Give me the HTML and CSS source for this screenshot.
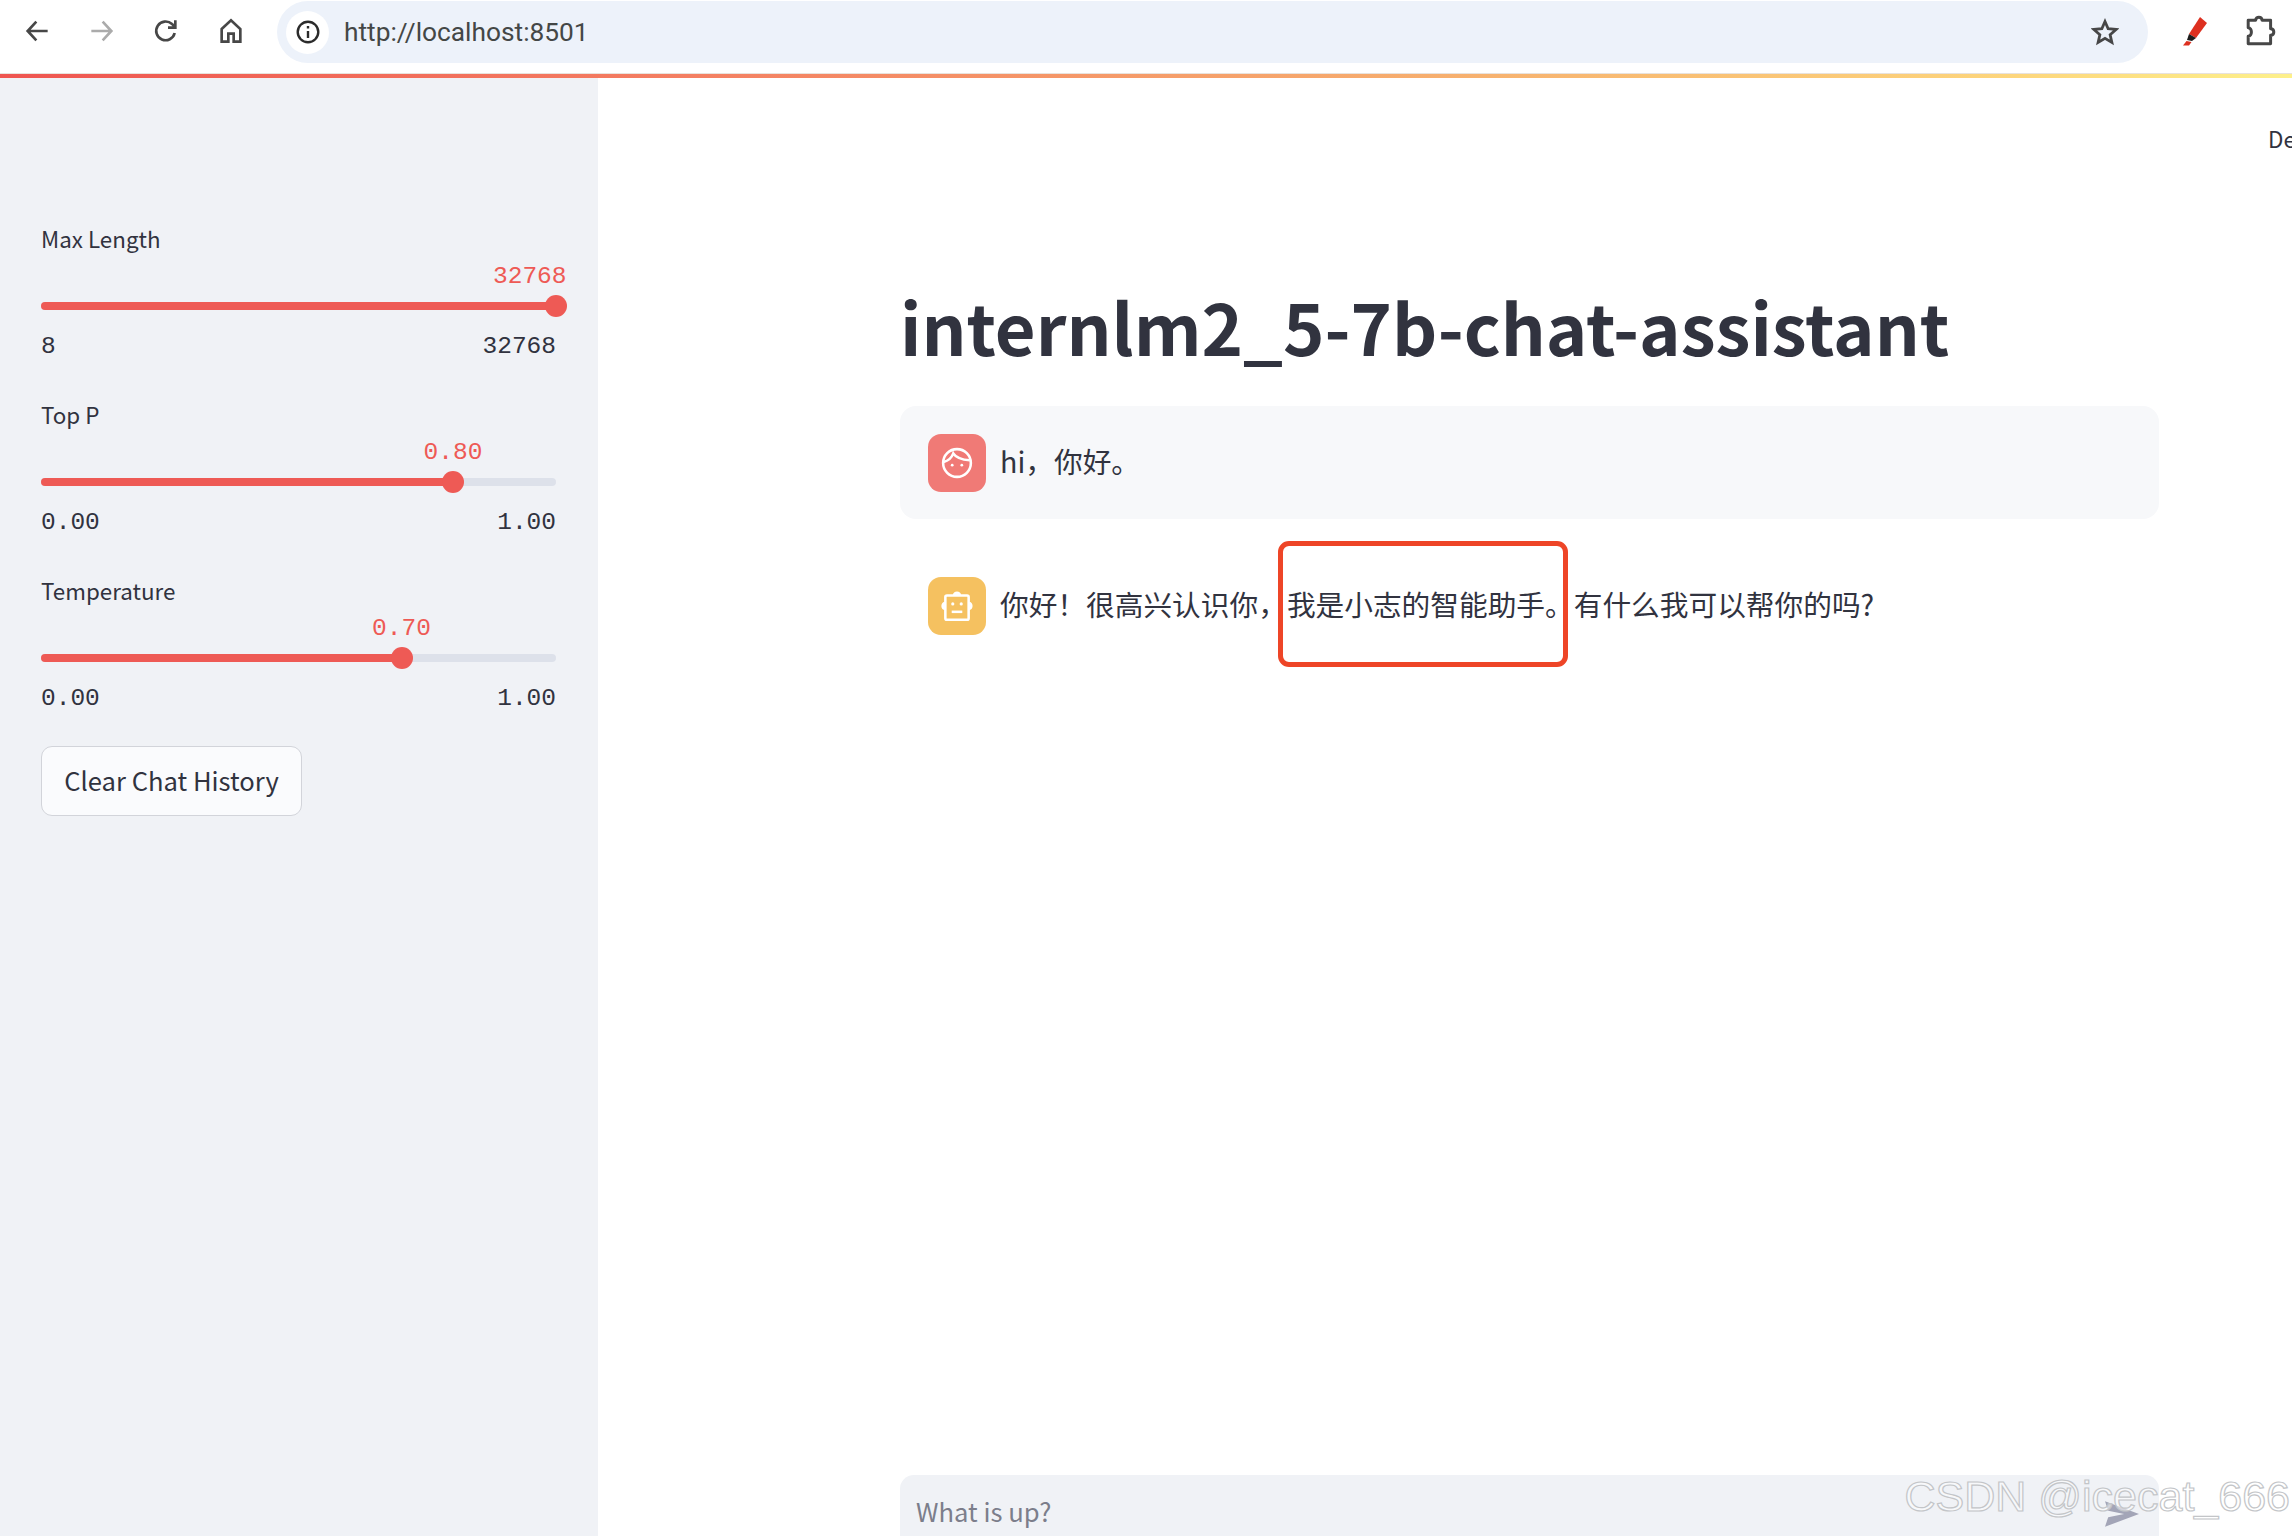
FILE: index.html
```html
<!DOCTYPE html>
<html lang="zh">
<head>
<meta charset="utf-8">
<title>internlm2_5-7b-chat-assistant</title>
<link rel="stylesheet" href="styles.css">
</head>
<body>
<div class="app">
  <header class="toolbar">
    <nav class="nav-icons">
      <svg class="tb-icon" viewBox="0 0 24 24"><path d="M20 12H5M11.5 5L5 12l6.500 7"/></svg>
      <svg class="tb-icon faded" viewBox="0 0 24 24"><path d="M4 12h15M12.500 5L19 12l-6.500 7"/></svg>
      <svg class="tb-icon" viewBox="0 0 24 24"><path d="M18.500 13.500A7 7 0 1 1 16.500 6.800L19 9M19 4v5.500h-5.500"/></svg>
      <svg class="tb-icon" viewBox="0 0 24 24"><path d="M5 10.500L12 4l7 6.500V20h-5v-6h-4v6H5z"/></svg>
    </nav>
    <div class="omnibox">
      <span class="site-info"><svg class="info-icon" viewBox="0 0 24 24"><circle cx="12" cy="12" r="9.500"/><path d="M12 11v6.500M12 6.500v2.200"/></svg></span>
      <span class="url">http://localhost:8501</span>
      <svg class="star" viewBox="0 0 24 24"><path d="M12 3l2.700 6.200 6.800.6-5.100 4.500 1.500 6.700L12 17.500 6.100 21l1.500-6.700L2.500 9.800l6.800-.6z"/></svg>
    </div>
    <div class="ext-icons">
      <svg class="pen" viewBox="0 0 24 30"><path class="pen-body" d="M17 1l7 6-11 15-7-4z"/><path class="pen-tip" d="M6 18l7 4-4 3-5-1z"/><path class="pen-body" d="M3.500 25l5 1L6 29.500H0z"/></svg>
      <svg class="puzzle" viewBox="0 0 30 30"><path d="M3 5h7c0-4 6-4 6 0h8v8c4 0 4 6 0 6v8H3v-7c4 0 4-8 0-8z"/></svg>
    </div>
  </header>
  <div class="progress"></div>
  <div class="layout">
    <aside class="sidebar">
      <section class="slider">
        <label class="slider-label">Max Length</label>
        <div class="track">
          <div class="fill" style="width:100%"></div>
          <div class="thumb" style="left:100%"></div>
          <span class="value" style="left:100%">32768</span>
        </div>
        <div class="ticks"><span>8</span><span>32768</span></div>
      </section>
      <section class="slider">
        <label class="slider-label">Top P</label>
        <div class="track">
          <div class="fill" style="width:80%"></div>
          <div class="thumb" style="left:80%"></div>
          <span class="value" style="left:80%">0.80</span>
        </div>
        <div class="ticks"><span>0.00</span><span>1.00</span></div>
      </section>
      <section class="slider">
        <label class="slider-label">Temperature</label>
        <div class="track">
          <div class="fill" style="width:70%"></div>
          <div class="thumb" style="left:70%"></div>
          <span class="value" style="left:70%">0.70</span>
        </div>
        <div class="ticks"><span>0.00</span><span>1.00</span></div>
      </section>
      <button class="clear-btn">Clear Chat History</button>
    </aside>
    <main class="main">
      <span class="deploy">Deploy</span>
      <h1 class="title">internlm2_5-7b-chat-assistant</h1>
      <div class="message user">
        <div class="avatar avatar-user">
          <svg class="avatar-icon" viewBox="0 0 30 30"><circle cx="15" cy="15" r="13"/><path d="M2.500 14C7 13 10 10 11.500 6c2.500 4 8 6 15.500 6.500"/><circle class="dot" cx="10.500" cy="17" r="1.300"/><circle class="dot" cx="19.500" cy="17" r="1.300"/></svg>
        </div>
        <p class="message-text">hi，你好。</p>
      </div>
      <div class="message assistant">
        <div class="avatar avatar-bot">
          <svg class="avatar-icon bot" viewBox="0 0 34 30"><rect x="6" y="5" width="22" height="23" rx="1.500"/><path class="solid" d="M13 5c0-5 8-5 8 0zM6 11c-5 0-5 8 0 8zM28 11c5 0 5 8 0 8z"/><circle class="dot" cx="13" cy="13" r="1.500"/><circle class="dot" cx="21" cy="13" r="1.500"/><path d="M12 20.500h10"/></svg>
        </div>
        <p class="message-text">你好！很高兴认识你，<span class="highlight">我是小志的智能助手。</span>有什么我可以帮你的吗?</p>
      </div>
      <div class="chat-input">
        <span class="placeholder">What is up?</span>
        <svg class="send" viewBox="0 0 32 24"><path d="M0 0l32 12L0 24l3-9 15-3-15-3z"/></svg>
      </div>
    </main>
  </div>
  <div class="watermark">CSDN @icecat_666</div>
</div>
</body>
</html>
```

FILE: styles.css
```css
* { box-sizing: border-box; }
html, body { margin: 0; height: 100%; overflow: hidden; background: #fff; }
body { font-family: "Noto Sans CJK SC", "Noto Sans", sans-serif; color: #31333f; }

.app { position: relative; width: 2292px; height: 1536px; display: flex; flex-direction: column; overflow: hidden; }

.toolbar { height: 74px; display: flex; align-items: flex-start; background: #fff; border-bottom: 1px solid #e8e2dc; flex: none; }
.nav-icons { display: flex; gap: 32.500px; padding: 15px 0 0 21px; width: 277px; }
.tb-icon { width: 32px; height: 32px; fill: none; stroke: #474747; stroke-width: 2; }
.tb-icon.faded { stroke: #ababab; }

.omnibox { width: 1871px; height: 62px; margin-top: 1px; border-radius: 31px; background: #edf2fa; display: flex; align-items: center; padding: 0 29px 0 9px; }
.site-info { width: 43px; height: 43px; border-radius: 50%; background: #fff; display: flex; align-items: center; justify-content: center; flex: none; }
.info-icon { width: 26px; height: 26px; fill: none; stroke: #2b2b2b; stroke-width: 2.200; }
.url { margin-left: 15px; font-family: "Roboto", "Liberation Sans", sans-serif; font-size: 26.300px; color: #444746; flex: 1; }
.star { width: 28px; height: 28px; fill: none; stroke: #474747; stroke-width: 2.400; }

.ext-icons { display: flex; align-items: center; gap: 38px; padding: 15px 0 0 35px; }
.pen { width: 24px; height: 30px; }
.pen-body { fill: #dd3020; }
.pen-tip { fill: #1c1c1c; }
.puzzle { width: 32px; height: 32px; fill: none; stroke: #474747; stroke-width: 2.800; stroke-linejoin: round; }

.progress { height: 4px; flex: none; background: linear-gradient(90deg, #ef5550 0%, #f47f62 30%, #f7b26f 65%, #fdd67c 88%, #fdf08b 100%); }

.layout { flex: 1; display: flex; min-height: 0; }

.sidebar { width: 598px; flex: none; background: #f0f2f6; padding: 142px 42px 0 41px; display: flex; flex-direction: column; align-items: stretch; }
.slider { margin-bottom: 31px; }
.slider:nth-of-type(3) { margin-bottom: 29px; }
.slider-label { display: block; height: 36px; line-height: 36px; font-size: 22.400px; }
.track { position: relative; height: 8px; margin: 46px 0 19px; background: #dde1ea; border-radius: 4px; }
.fill { height: 100%; background: #ee5a55; border-radius: 4px; }
.thumb { position: absolute; top: 50%; width: 22px; height: 22px; border-radius: 50%; background: #ee5a55; transform: translate(-50%, -50%); }
.value { position: absolute; bottom: 18px; transform: translateX(-50%); font-family: "Liberation Mono", monospace; font-size: 24.500px; line-height: 30px; color: #ee5a55; white-space: nowrap; }
.slider:first-of-type .value { transform: translateX(-63px); }
.ticks { display: flex; justify-content: space-between; height: 36px; line-height: 36px; font-family: "Liberation Mono", monospace; font-size: 24.500px; }

.clear-btn { align-self: flex-start; width: 261px; height: 70px; border: 1.500px solid #d2d4da; border-radius: 11px; background: #fafbfd; color: #31333f; font: inherit; font-size: 25.600px; padding: 0 0 3px; }

.main { position: relative; flex: 1; min-width: 0; display: flex; flex-direction: column; padding: 0 133px 0 302px; }
.deploy { position: absolute; top: 42px; left: 1670px; font-size: 22.400px; line-height: 36px; white-space: nowrap; }
.title { margin: 0; height: 328px; padding-top: 212px; font-size: 70.400px; line-height: 1; font-weight: 700; white-space: nowrap; }
.message { display: flex; align-items: center; gap: 14px; height: 113px; padding: 0 28px; border-radius: 16px; }
.message.user { background: #f7f8fa; margin-bottom: 30px; }
.avatar { width: 58px; height: 58px; border-radius: 13px; display: flex; align-items: center; justify-content: center; flex: none; }
.avatar-user { background: #f07a76; }
.avatar-bot { background: #f5c160; }
.avatar-icon { width: 32px; height: 32px; fill: none; stroke: #fff; stroke-width: 2.400; }
.avatar-icon.bot { width: 36px; }
.avatar-icon .dot, .avatar-icon .solid { fill: #fff; stroke: none; }
.message-text { margin: 0 0 3px; font-size: 28.700px; line-height: 1.6; white-space: nowrap; }
.highlight { position: relative; }
.highlight::after { content: ""; position: absolute; left: -9px; right: 6px; top: -42px; bottom: -43px; border: 5px solid #ee4527; border-radius: 11px; }

.chat-input { margin-top: auto; height: 61px; background: #f0f2f6; border-radius: 14px 14px 0 0; display: flex; align-items: center; padding: 10px 20px 0 16px; justify-content: space-between; }
.placeholder { font-size: 25.600px; color: #7c7e8b; }
.send { width: 34px; height: 26px; fill: #a3a5b7; margin-top: 6px; }

.watermark { position: absolute; right: 2px; bottom: 15px; font-family: "Liberation Sans", sans-serif; font-size: 43px; color: rgba(255,255,255,.55); -webkit-text-stroke: 1.200px #c3c5c8; white-space: nowrap; }
```
